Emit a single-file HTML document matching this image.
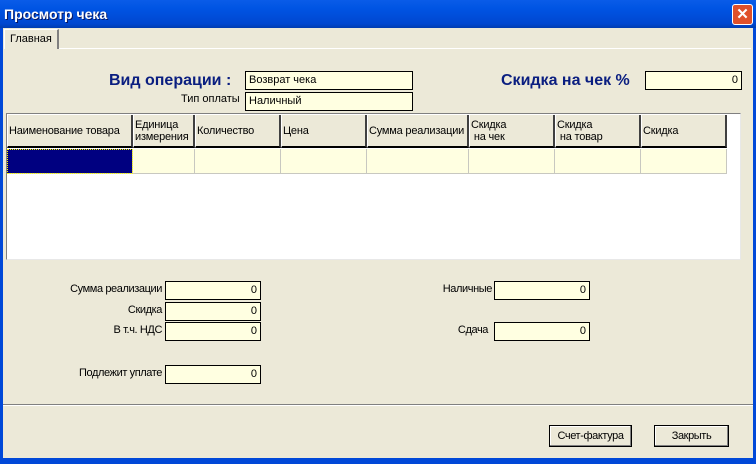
<!DOCTYPE html><html><head><meta charset="utf-8"><style>
*{margin:0;padding:0;box-sizing:border-box}
body{width:756px;height:464px;overflow:hidden;background:#ece9d8;font-family:"Liberation Sans",sans-serif;font-size:11px;position:relative}
.a{position:absolute;white-space:nowrap}
.f{position:absolute;background:#ffffe1;border:1px solid #000;font-size:11px;line-height:17px;padding:0 3px}
.r{text-align:right}
.l{position:absolute;text-align:right;white-space:nowrap;font-size:11px;letter-spacing:-0.4px}
.h{position:absolute;top:115px;height:33px;background:#ece9d8;border-left:1px solid #fff;border-right:2px solid #404040;border-bottom:2px solid #000;font-size:11px;line-height:12px;padding-left:1px;display:flex;align-items:center;white-space:nowrap;overflow:hidden;letter-spacing:-0.2px}
.c{position:absolute;top:149px;height:25px;background:#ffffe1;border-right:1px solid #c8c8c0;border-bottom:1px solid #c8c8c0}
.b{position:absolute;border:1px solid #000;background:#ece9d8;box-shadow:inset -1px -1px #808080,inset 1px 1px #fff;text-align:center;font-size:11px;letter-spacing:-0.4px}
.nv{color:#0a1e80;font-weight:bold;font-size:16px}
</style></head><body>
<div class="a" style="left:0;top:0;width:756px;height:28px;background:linear-gradient(#0a5ce8,#0054e3 30%,#0047d0 85%,#003cb0);"></div>
<div class="a" style="left:4px;top:6px;color:#fff;font-weight:bold;font-size:14px;text-shadow:1px 1px #0a1860">Просмотр чека</div>
<div class="a" style="left:732px;top:4px;width:21px;height:21px;border:1px solid #fff;border-radius:3px;background:#e0502a;color:#fff;font-weight:bold;font-size:15px;text-align:center;line-height:19px">✕</div>
<div class="a" style="left:0;top:28px;width:3px;height:436px;background:#0048d8"></div>
<div class="a" style="left:753px;top:28px;width:3px;height:436px;background:#0048d8"></div>
<div class="a" style="left:0;top:458px;width:756px;height:6px;background:#0048d8"></div>
<div class="a" style="left:58px;top:48px;width:693px;height:1px;background:#fff"></div>
<div class="a" style="left:4px;top:29px;width:55px;height:20px;border-left:1px solid #fff;border-top:1px solid #fff;border-right:2px solid #808080;padding:3px 0 0 5px">Главная</div>
<div class="a nv" style="left:109px;top:72px">Вид операции :</div>
<div class="f" style="left:245px;top:71px;width:168px;height:19px">Возврат чека</div>
<div class="a" style="left:181px;top:93px">Тип оплаты</div>
<div class="f" style="left:245px;top:92px;width:168px;height:19px">Наличный</div>
<div class="a nv" style="left:501px;top:72px">Скидка на чек %</div>
<div class="f r" style="left:645px;top:71px;width:97px;height:19px">0</div>
<div class="a" style="left:6px;top:113px;width:735px;height:147px;background:#fff;border:1px solid #808080;border-right-color:#e8e8e8;border-bottom-color:#e8e8e8"></div>
<div class="h" style="left:7px;width:126px">Наименование товара</div>
<div class="h" style="left:133px;width:62px">Единица<br>измерения</div>
<div class="h" style="left:195px;width:86px">Количество</div>
<div class="h" style="left:281px;width:86px">Цена</div>
<div class="h" style="left:367px;width:102px">Сумма реализации</div>
<div class="h" style="left:469px;width:86px">Скидка<br>&nbsp;на чек</div>
<div class="h" style="left:555px;width:86px">Скидка<br>&nbsp;на товар</div>
<div class="h" style="left:641px;width:86px">Скидка</div>
<div class="c" style="left:7px;width:126px;background:#000080;outline:1px dotted #ff0;outline-offset:-1px"></div>
<div class="c" style="left:133px;width:62px"></div>
<div class="c" style="left:195px;width:86px"></div>
<div class="c" style="left:281px;width:86px"></div>
<div class="c" style="left:367px;width:102px"></div>
<div class="c" style="left:469px;width:86px"></div>
<div class="c" style="left:555px;width:86px"></div>
<div class="c" style="left:641px;width:86px"></div>
<div class="l" style="right:594px;top:283px">Сумма реализации</div>
<div class="f r" style="left:165px;top:281px;width:96px;height:19px">0</div>
<div class="l" style="right:594px;top:304px">Скидка</div>
<div class="f r" style="left:165px;top:302px;width:96px;height:19px">0</div>
<div class="l" style="right:594px;top:324px">В т.ч. НДС</div>
<div class="f r" style="left:165px;top:322px;width:96px;height:19px">0</div>
<div class="l" style="right:594px;top:367px">Подлежит уплате</div>
<div class="f r" style="left:165px;top:365px;width:96px;height:19px">0</div>
<div class="l" style="right:264px;top:283px">Наличные</div>
<div class="f r" style="left:494px;top:281px;width:96px;height:19px">0</div>
<div class="l" style="right:268px;top:324px">Сдача</div>
<div class="f r" style="left:494px;top:322px;width:96px;height:19px">0</div>
<div class="a" style="left:3px;top:404px;width:750px;height:2px;border-top:1px solid #808080;border-bottom:1px solid #fff"></div>
<div class="b" style="left:549px;top:425px;width:83px;height:22px;line-height:20px">Счет-фактура</div>
<div class="b" style="left:654px;top:425px;width:75px;height:22px;line-height:20px">Закрыть</div>
</body></html>
